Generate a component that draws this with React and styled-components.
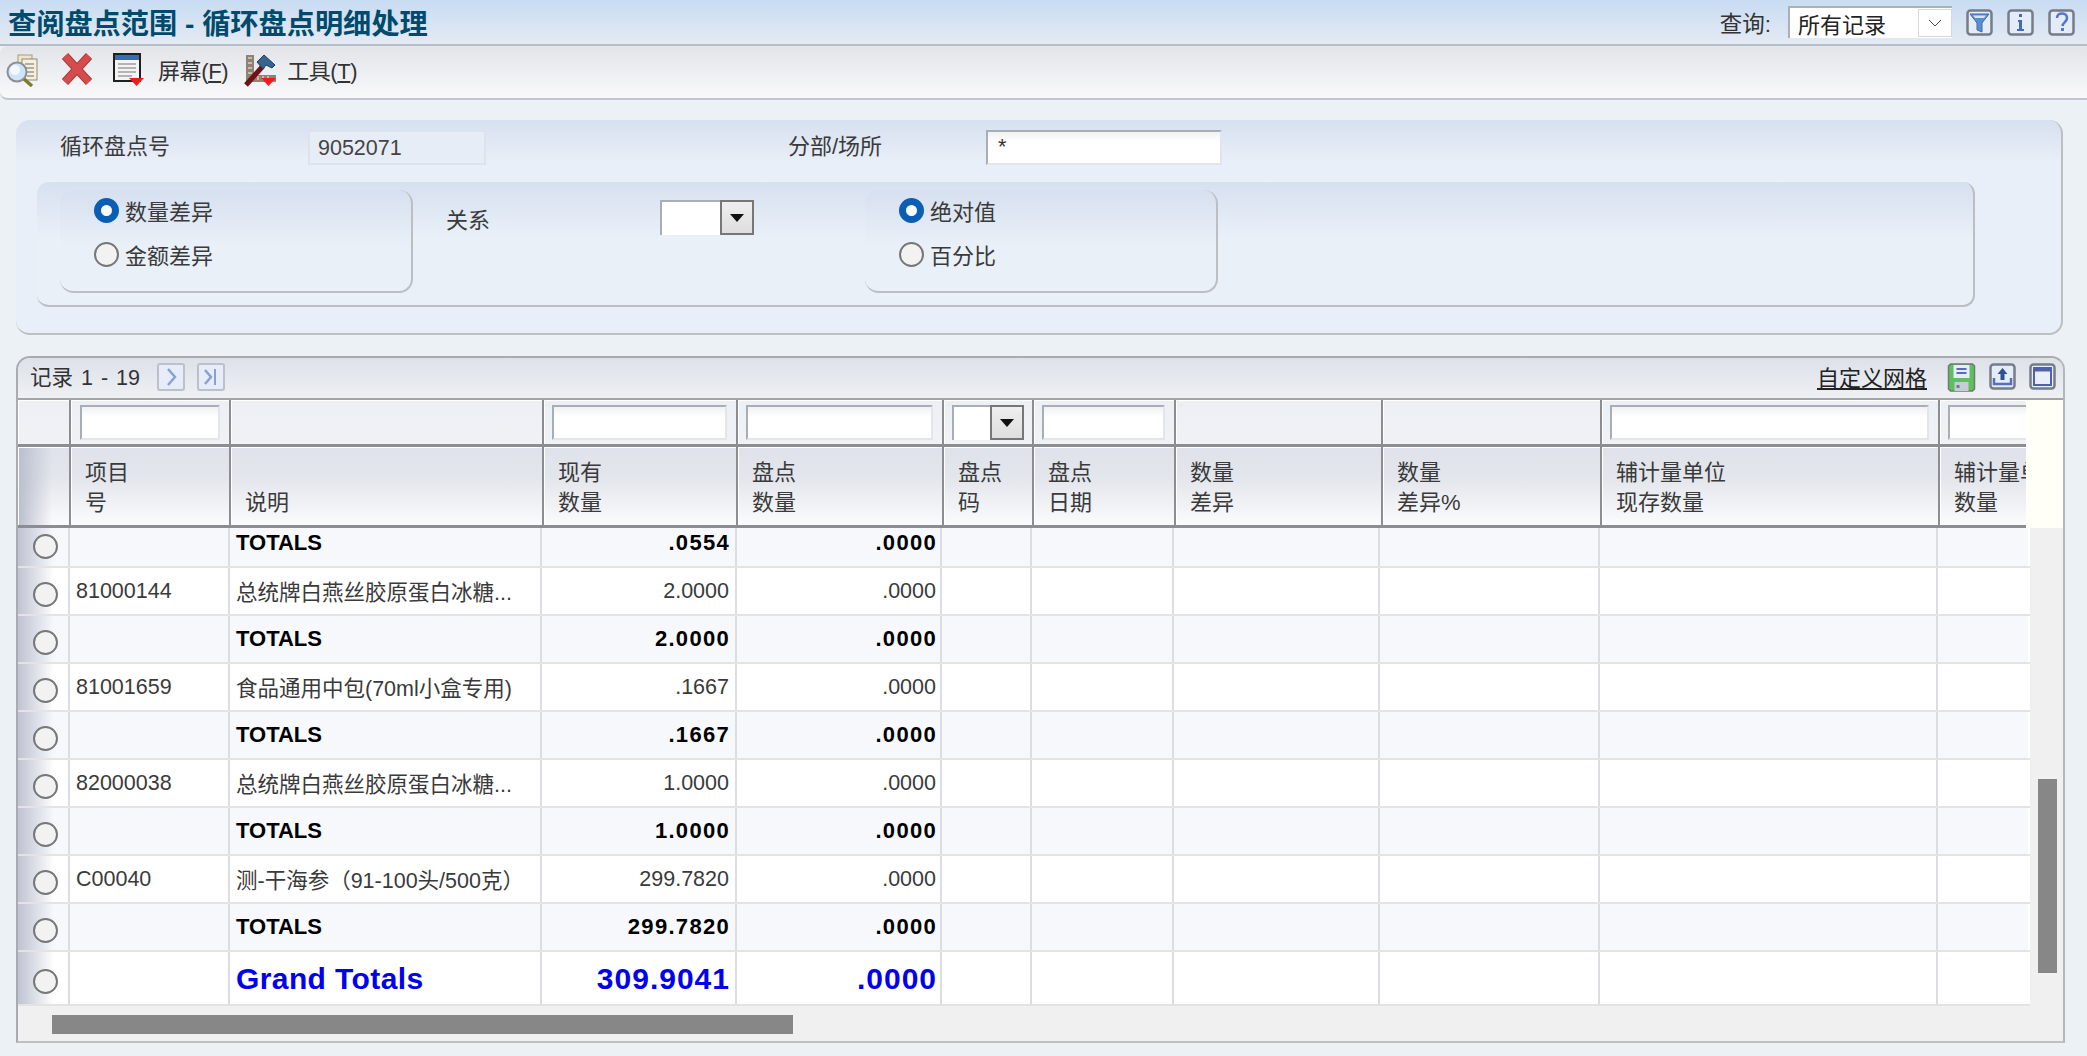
import React from "react";
import styled, { createGlobalStyle } from "styled-components";

const FONT = `"Liberation Sans", "Noto Sans CJK SC", sans-serif`;
const HEAD_COLS = "53px 160px 313px 194px 206px 90px 142px 207px 219px 338px 90px";
const BODY_COLS = "52px 160px 312px 195px 205px 90px 142px 206px 220px 338px 92px";

const GlobalStyle = createGlobalStyle`
  html, body { margin: 0; padding: 0; background: #ecf1f5; }
  body { font-family: ${FONT}; font-size: 22px; color: #333; overflow: hidden; }
  * { box-sizing: border-box; }
`;

const Page = styled.div`
  width: 2087px;
  height: 1056px;
  display: flex;
  flex-direction: column;
  background: #ecf1f5;
`;

/* title bar */
const TitleBar = styled.header`
  height: 46px;
  padding: 0 12px 0 8px;
  display: flex;
  align-items: center;
  justify-content: space-between;
  background: linear-gradient(#c8dcf3, #e4eaf3);
  border-bottom: 2px solid #b4bdca;
`;
const Title = styled.h1`
  margin: 0 0 2px;
  font-size: 28.2px;
  font-weight: 700;
  color: #004a6c;
  white-space: nowrap;
`;
const TitleTools = styled.div`
  display: flex;
  align-items: center;
`;
const QueryLabel = styled.span`
  font-size: 22.5px;
  color: #333;
  margin-right: 17px;
`;
const QuerySelect = styled.div`
  width: 164px;
  height: 32px;
  margin-right: 14px;
  padding: 2px 0 0 8px;
  display: flex;
  justify-content: space-between;
  background: #fff;
  border-top: 2px solid #a8b0ba;
  border-left: 2px solid #a8b0ba;
  line-height: 32px;
  font-size: 22px;
  color: #222;
  overflow: hidden;
`;
const QueryArrow = styled.span`
  width: 34px;
  height: 28px;
  margin-top: -1px;
  display: flex;
  align-items: center;
  justify-content: center;
  border: 1px solid #d4d9e0;
  background: #fff;
`;
const IconRow = styled.div`
  display: flex;
  gap: ${(p) => p.$gap || 14}px;
`;

/* toolbar */
const Toolbar = styled.nav`
  height: 54px;
  padding-top: 7px;
  display: flex;
  align-items: flex-start;
  background: linear-gradient(#e2e4e8, #f9f9fa);
  border-bottom: 2px solid #bcc6d2;
  border-top-left-radius: 8px;
  border-bottom-left-radius: 8px;
`;
const ToolIcon = styled.span`
  display: flex;
  margin-left: ${(p) => p.$left}px;
`;
const MenuText = styled.span`
  margin: 6px 0 0 ${(p) => p.$left}px;
  font-size: 22px;
  line-height: 26px;
  letter-spacing: -0.4px;
  color: #333;
  white-space: nowrap;
`;

/* form */
const FormPanel = styled.section`
  width: 2047px;
  height: 215px;
  margin: 20px 0 0 16px;
  background: linear-gradient(#d7e0f0, #e9eff8 42px);
  border-right: 2px solid #bcbec2;
  border-bottom: 2px solid #bcbec2;
  border-radius: 14px;
`;
const FieldRow = styled.div`
  height: 62px;
  padding: 10px 0 0 44px;
  display: flex;
  align-items: flex-start;
`;
const FieldLabel = styled.label`
  width: ${(p) => p.$w}px;
  margin-left: ${(p) => p.$left || 0}px;
  font-size: 22px;
  line-height: 34px;
  color: #3a3a3a;
`;
const ReadOnlyBox = styled.div`
  width: 178px;
  height: 35px;
  padding-left: 8px;
  border: 2px solid #dde3ec;
  background: #e7edf6;
  font-size: 21.5px;
  line-height: 33px;
  color: #444;
`;
const TextBox = styled.input`
  width: ${(p) => p.$w || "100%"};
  height: ${(p) => p.$h || 35}px;
  padding: 0 10px;
  border-style: solid;
  border-width: 2px;
  border-color: #a8aeb6 #e2e5ea #e2e5ea #a8aeb6;
  background: linear-gradient(#eff1f3, #fff 10px);
  font-family: ${FONT};
  font-size: 21.5px;
  color: #333;
  outline: none;
  flex-shrink: 0;
`;
const InnerPanel = styled.div`
  width: 1938px;
  height: 125px;
  margin-left: 21px;
  padding: 8px 0 0 23px;
  display: flex;
  align-items: flex-start;
  background: linear-gradient(#d7e0f0, #e9f0f8 56px);
  border-right: 2px solid #bcbec2;
  border-bottom: 2px solid #bcbec2;
  border-radius: 12px;
`;
const RadioGroup = styled.div`
  width: 353px;
  height: 103px;
  padding-left: 34px;
  display: grid;
  grid-auto-rows: 40px;
  row-gap: 4px;
  background: linear-gradient(#d7e0f0, #e9f0f8 56px);
  border-right: 2px solid #bcbec2;
  border-bottom: 2px solid #bcbec2;
  border-radius: 14px;
`;
const RadioLine = styled.label`
  display: flex;
  align-items: center;
  gap: 6px;
  font-size: 22px;
  color: #3a3a3a;
`;
const Radio = styled.input.attrs({ type: "radio" })`
  appearance: none;
  width: 25px;
  height: 25px;
  margin: 0;
  flex-shrink: 0;
  border-radius: 50%;
  border: 2px solid #777;
  background: #f2f2f2;
  &:checked {
    border: 7px solid #0a5fb4;
    background: #fff;
  }
`;
const RelationLabel = styled.span`
  width: 214px;
  margin: 18px 0 0 33px;
  font-size: 22px;
  line-height: 26px;
  color: #3a3a3a;
`;
const Combo = styled.div`
  width: ${(p) => p.$w}px;
  height: ${(p) => p.$h}px;
  margin: ${(p) => p.$margin || 0};
  display: flex;
  flex-shrink: 0;
  border-top: 2px solid #a8aeb6;
  border-left: 2px solid #a8aeb6;
  background: #fff;
`;
const ComboButton = styled.span`
  width: 34px;
  margin: -2px 0 0 auto;
  display: flex;
  align-items: center;
  justify-content: center;
  border: 2px solid #777;
  background: linear-gradient(#efefef, #dedede);
`;
const ComboArrow = styled.i`
  width: 0;
  height: 0;
  border-left: 7px solid transparent;
  border-right: 7px solid transparent;
  border-top: 8px solid #111;
`;

/* grid */
const GridPanel = styled.section`
  width: 2049px;
  height: 687px;
  margin: 21px 0 0 16px;
  overflow: hidden;
  background: #f0f0f0;
  border: 2px solid #a9abb0;
  border-bottom-color: #c0c0c0;
  border-right-color: #b4b6ba;
  border-radius: 14px 14px 0 0;
`;
const GridBar = styled.div`
  height: 42px;
  padding: 5px 7px 0 12px;
  display: flex;
  align-items: flex-start;
  background: linear-gradient(#dde1e8, #eef0f4);
  border-bottom: 2px solid #a2a4aa;
`;
const RecordCount = styled.span`
  width: 127px;
  font-size: 21.5px;
  line-height: 30px;
  word-spacing: 2px;
  color: #333;
`;
const CustomLink = styled.a`
  margin: 0 20px 0 auto;
  font-size: 22px;
  line-height: 32px;
  color: #222;
  text-decoration: underline;
`;
const HeadWrap = styled.div`
  height: 128px;
  background: #fffff8;
`;
const HeadGrid = styled.div`
  width: 2008px;
  display: grid;
  grid-template-columns: ${HEAD_COLS};
  overflow: hidden;
`;
const FilterCell = styled.div`
  height: 47px;
  padding: 5px 9px 0 8px;
  overflow: hidden;
  background: linear-gradient(#eceff4, #f0f2f6);
  border-right: 2px solid #8b8d93;
  border-bottom: 3px solid #8b8d93;
  box-shadow: inset 1px 1px 0 #fff;
  &:nth-child(2) {
    padding-left: 9px;
  }
`;
const HeadCell = styled.div`
  height: 81px;
  padding: 0 0 7px 14px;
  display: flex;
  flex-direction: column;
  justify-content: flex-end;
  overflow: hidden;
  white-space: nowrap;
  background: ${(p) =>
    p.$first
      ? "linear-gradient(90deg, #b9becd, transparent 34px), linear-gradient(#dfe2ea, #e3e6ec 40%, #fbfbfd)"
      : "linear-gradient(#dfe2ea, #e3e6ec 40%, #fbfbfd)"};
  border-right: 2px solid #8b8d93;
  border-bottom: 3px solid #8b8d93;
  box-shadow: inset 1px 1px 0 #fff;
  font-size: 22px;
  line-height: 30px;
  color: #3a3a3a;
`;
const HeadLine = styled.span`
  display: block;
`;
const GridMiddle = styled.div`
  display: flex;
  height: 478px;
`;
const Table = styled.div`
  width: 2012px;
`;
const Row = styled.div`
  height: ${(p) => p.$h}px;
  display: grid;
  grid-template-columns: ${BODY_COLS};
  background: ${(p) => (p.$alt ? "#f6f8fc" : "#fff")};
  border-bottom: 2px solid #e3e3e3;
`;
const RadioCell = styled.div`
  padding: ${(p) => p.$top}px 0 0 15px;
  background: linear-gradient(90deg, #bfc3d2, ${(p) => (p.$alt ? "#f6f8fc" : "#fff")} 36px);
  border-right: 2px solid #dcdde3;
`;
const Cell = styled.div`
  padding: ${(p) => p.$top}px ${(p) => p.$pr || 0}px 0 6px;
  text-align: ${(p) => (p.$pr ? "right" : "left")};
  font-size: ${(p) => (p.$grand ? 30 : p.$bold ? 22 : 21.5)}px;
  font-weight: ${(p) => (p.$bold ? 700 : 400)};
  letter-spacing: ${(p) => p.$spacing || 0}px;
  line-height: ${(p) => (p.$grand ? 40 : 30)}px;
  color: ${(p) => (p.$grand ? "#0000f0" : p.$bold ? "#000" : "#3a3a3a")};
  white-space: nowrap;
  overflow: hidden;
  border-right: 2px solid #dcdde3;
  &:last-child {
    border-right-color: #fff;
  }
`;
const VTrack = styled.div`
  flex: 1;
  padding: 251px 0 0 8px;
  background: #f0f0f0;
`;
const VThumb = styled.div`
  width: 19px;
  height: 194px;
  background: #878787;
`;
const HTrack = styled.div`
  height: 35px;
  padding: 9px 0 0 34px;
  background: #f0f0f0;
`;
const HThumb = styled.div`
  width: 741px;
  height: 19px;
  background: #878787;
`;

/* icons */
const SearchIcon = () => (
  <svg width="34" height="34" viewBox="0 0 34 34">
    <rect x="13" y="2" width="14" height="19" fill="#efe6c8" stroke="#a79a82" />
    <rect x="17" y="6" width="15" height="21" fill="#f6efdc" stroke="#8b8a80" />
    <path d="M20 11h9M20 15h9M22 19h7M22 23h7" stroke="#9a9a90" strokeWidth="1.5" />
    <circle cx="12" cy="19" r="9.5" fill="#cfe4f8" stroke="#8a8f94" strokeWidth="2" />
    <circle cx="10" cy="17" r="5" fill="#f2f8fe" />
    <path d="M19 26l8 7" stroke="#7d7d26" strokeWidth="3.5" />
  </svg>
);
const CloseIcon = () => (
  <svg width="32" height="32" viewBox="0 0 32 32">
    <path d="M4 3l24 26M28 3L4 29" stroke="#a83a3a" strokeWidth="8.5" />
    <path d="M4 3l24 26M28 3L4 29" stroke="#d64c4c" strokeWidth="6.5" />
  </svg>
);
const FormIcon = () => (
  <svg width="32" height="34" viewBox="0 0 32 34">
    <rect x="1" y="1" width="26" height="27" fill="#f4f4f4" stroke="#1f1f1f" strokeWidth="2" />
    <rect x="2" y="2" width="24" height="5" fill="#2d70b4" />
    <path d="M5 11h18M5 15h18M5 19h18M5 23h14" stroke="#b4b4b4" strokeWidth="2" />
    <path d="M16 25h15l-7.5 8z" fill="#f01c1c" />
  </svg>
);
const ToolsIcon = () => (
  <svg width="34" height="34" viewBox="0 0 34 34">
    <path d="M2 2h8v20h22v7H2z" fill="#8f8274" />
    <path d="M4 5h4M4 10h4M4 15h4M4 20h4M14 27v-4M19 27v-4M24 27v-4" stroke="#d8d0c4" strokeWidth="1.5" />
    <path d="M2 32l17-19" stroke="#6e1212" strokeWidth="5" />
    <path d="M13 9l7-7 11 10-3 3-6-3-3 4z" fill="#36658f" stroke="#1e3c58" strokeWidth="1" />
    <path d="M17 25h15l-7.5 8z" fill="#f01c1c" />
  </svg>
);
const Chevron = () => (
  <svg width="14" height="8" viewBox="0 0 14 8">
    <path d="M1 1l6 6 6-6" fill="none" stroke="#444" strokeWidth="1" />
  </svg>
);
const FrameIcon = ({ children, w = 27, h = 27, bg = "#e4ecfa" }) => (
  <svg width={w} height={h} viewBox="0 0 27 27">
    <rect x="1.5" y="1.5" width="24" height="24" rx="3" fill={bg} stroke="#767c88" strokeWidth="2.5" />
    {children}
  </svg>
);
const FilterIcon = () => (
  <FrameIcon>
    <path d="M4 5h19l-7 9v9l-5-2v-7z" fill="#5b8dcc" stroke="#3f6cae" strokeWidth="1" />
    <path d="M7 6.5h13l-2 2.5H9z" fill="#d6e4f8" />
  </FrameIcon>
);
const InfoIcon = () => (
  <FrameIcon>
    <path d="M11 11h4v9h2v2h-7v-2h2v-7h-1zM12 5h3v3h-3z" fill="#4468bb" />
  </FrameIcon>
);
const HelpIcon = () => (
  <FrameIcon>
    <path d="M9 9c0-6 10-6 10 0 0 4-4 4-4.5 8" fill="none" stroke="#5676c8" strokeWidth="2.6" />
    <path d="M13 19h3v3h-3z" fill="#5676c8" />
  </FrameIcon>
);
const NavButton = ({ last }) => (
  <svg width="28" height="28" viewBox="0 0 28 28">
    <rect x="1" y="1" width="26" height="26" rx="2" fill="#e6edf9" stroke="#bcc0c8" strokeWidth="2" />
    <path d={last ? "M8 7l6 7-6 7" : "M11 6l7 8-7 8"} fill="none" stroke="#8aa0cf" strokeWidth="2.5" />
    {last && <path d="M18 6v16" stroke="#8aa0cf" strokeWidth="2" />}
  </svg>
);
const SaveIcon = () => (
  <svg width="29" height="29" viewBox="0 0 28 29">
    <path d="M3 1h22l2 2v23l-2 2H3l-2-2V3z" fill="#5cc05c" stroke="#6f7a70" strokeWidth="1.5" />
    <rect x="6" y="2" width="16" height="13" fill="#e6ecf8" />
    <path d="M9 6h10M9 10h10" stroke="#5a6cb8" strokeWidth="2" />
    <rect x="7" y="19" width="14" height="9" fill="#c8ccd4" />
    <rect x="9" y="22" width="3" height="3" fill="#6a7a9a" />
  </svg>
);
const UploadIcon = () => (
  <FrameIcon>
    <path d="M13.5 5l5 6h-3v6h-4v-6h-3z" fill="#2f4f94" />
    <path d="M5 15v6h17v-6" fill="none" stroke="#5a6cc0" strokeWidth="2.5" />
  </FrameIcon>
);
const MaxIcon = () => (
  <FrameIcon bg="#eaf0fb">
    <rect x="5" y="5" width="17" height="17" fill="#e8effb" stroke="#4f62ac" strokeWidth="2" />
    <path d="M5 7h17" stroke="#4f62ac" strokeWidth="3" />
  </FrameIcon>
);

const HEADERS = [
  [],
  ["项目", "号"],
  ["说明"],
  ["现有", "数量"],
  ["盘点", "数量"],
  ["盘点", "码"],
  ["盘点", "日期"],
  ["数量", "差异"],
  ["数量", "差异%"],
  ["辅计量单位", "现存数量"],
  ["辅计量单位", "数量"],
];

const FILTERS = ["none", "text", "none", "text", "text", "combo", "text", "none", "none", "text", "cut"];

const SWALLOW = "总统牌白燕丝胶原蛋白冰糖...";
const ROWS = [
  { total: true, desc: "TOTALS", qty: ".0554", count: ".0000", alt: true, first: true },
  { item: "81000144", desc: SWALLOW, qty: "2.0000", count: ".0000" },
  { total: true, desc: "TOTALS", qty: "2.0000", count: ".0000", alt: true },
  { item: "81001659", desc: "食品通用中包(70ml小盒专用)", qty: ".1667", count: ".0000" },
  { total: true, desc: "TOTALS", qty: ".1667", count: ".0000", alt: true },
  { item: "82000038", desc: SWALLOW, qty: "1.0000", count: ".0000" },
  { total: true, desc: "TOTALS", qty: "1.0000", count: ".0000", alt: true },
  { item: "C00040", desc: "测-干海参（91-100头/500克）", qty: "299.7820", count: ".0000" },
  { total: true, desc: "TOTALS", qty: "299.7820", count: ".0000", alt: true },
  { grand: true, desc: "Grand Totals", qty: "309.9041", count: ".0000" },
];

function GridRow({ row, index }) {
  const height = row.first ? 40 : row.grand ? 54 : 48;
  const top = row.first ? 0 : row.grand ? 7 : 8;
  const bold = row.total || row.grand;
  const numSpacing = row.grand ? 1 : bold ? 1.3 : 0;
  const trim = bold ? 1 : 0;
  return (
    <Row $h={height} $alt={row.alt}>
      <RadioCell $alt={row.alt} $top={row.first ? 6 : row.grand ? 17 : 14}>
        <Radio name="gridRow" aria-label={`row ${index + 1}`} />
      </RadioCell>
      <Cell $top={top}>{row.item}</Cell>
      <Cell $top={bold ? top : top + 2} $bold={bold} $grand={row.grand} $spacing={row.grand ? 0.4 : 0}>
        {row.desc}
      </Cell>
      <Cell $pr={6 - trim} $top={top} $bold={bold} $grand={row.grand} $spacing={numSpacing}>{row.qty}</Cell>
      <Cell $pr={4 - trim} $top={top} $bold={bold} $grand={row.grand} $spacing={numSpacing}>{row.count}</Cell>
      {[0, 1, 2, 3, 4, 5].map((n) => (
        <Cell key={n} $top={top} />
      ))}
    </Row>
  );
}

export default function App() {
  return (
    <Page>
      <GlobalStyle />
      <TitleBar>
        <Title>查阅盘点范围 - 循环盘点明细处理</Title>
        <TitleTools>
          <QueryLabel>查询:</QueryLabel>
          <QuerySelect>
            所有记录
            <QueryArrow><Chevron /></QueryArrow>
          </QuerySelect>
          <IconRow>
            <FilterIcon />
            <InfoIcon />
            <HelpIcon />
          </IconRow>
        </TitleTools>
      </TitleBar>

      <Toolbar>
        <ToolIcon $left={5}><SearchIcon /></ToolIcon>
        <ToolIcon $left={22}><CloseIcon /></ToolIcon>
        <ToolIcon $left={20}><FormIcon /></ToolIcon>
        <MenuText $left={13}>屏幕(<u>F</u>)</MenuText>
        <ToolIcon $left={16}><ToolsIcon /></ToolIcon>
        <MenuText $left={9}>工具(<u>T</u>)</MenuText>
      </Toolbar>

      <FormPanel>
        <FieldRow>
          <FieldLabel $w={248}>循环盘点号</FieldLabel>
          <ReadOnlyBox>9052071</ReadOnlyBox>
          <FieldLabel $w={198} $left={302}>分部/场所</FieldLabel>
          <TextBox $w="236px" defaultValue="*" />
        </FieldRow>
        <InnerPanel>
          <RadioGroup>
            <RadioLine><Radio name="diffType" defaultChecked />数量差异</RadioLine>
            <RadioLine><Radio name="diffType" />金额差异</RadioLine>
          </RadioGroup>
          <RelationLabel>关系</RelationLabel>
          <Combo $w={94} $h={35} $margin="10px 111px 0 0">
            <ComboButton><ComboArrow /></ComboButton>
          </Combo>
          <RadioGroup>
            <RadioLine><Radio name="valueType" defaultChecked />绝对值</RadioLine>
            <RadioLine><Radio name="valueType" />百分比</RadioLine>
          </RadioGroup>
        </InnerPanel>
      </FormPanel>

      <GridPanel>
        <GridBar>
          <RecordCount>记录 1 - 19</RecordCount>
          <IconRow $gap={12}>
            <NavButton />
            <NavButton last />
          </IconRow>
          <CustomLink>自定义网格</CustomLink>
          <IconRow $gap={13}>
            <SaveIcon />
            <UploadIcon />
            <MaxIcon />
          </IconRow>
        </GridBar>

        <HeadWrap>
          <HeadGrid>
            {FILTERS.map((kind, i) => (
              <FilterCell key={i}>
                {kind === "text" && <TextBox $h={35} />}
                {kind === "cut" && <TextBox $h={35} $w="110px" />}
                {kind === "combo" && (
                  <Combo $w={72} $h={35}>
                    <ComboButton><ComboArrow /></ComboButton>
                  </Combo>
                )}
              </FilterCell>
            ))}
            {HEADERS.map((lines, i) => (
              <HeadCell key={i} $first={i === 0}>
                {lines.map((line) => (
                  <HeadLine key={line}>{line}</HeadLine>
                ))}
              </HeadCell>
            ))}
          </HeadGrid>
        </HeadWrap>

        <GridMiddle>
          <Table>
            {ROWS.map((row, i) => (
              <GridRow key={i} row={row} index={i} />
            ))}
          </Table>
          <VTrack><VThumb /></VTrack>
        </GridMiddle>
        <HTrack><HThumb /></HTrack>
      </GridPanel>
    </Page>
  );
}
